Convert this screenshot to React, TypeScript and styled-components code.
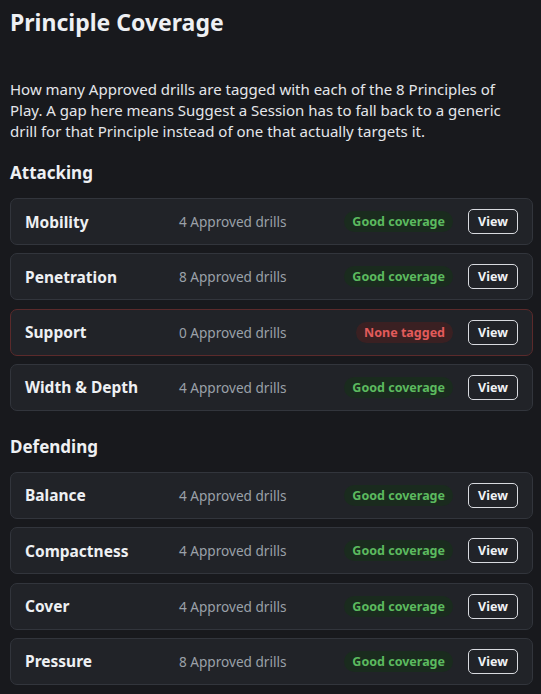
import React from "react";
import styled, { createGlobalStyle } from "styled-components";

const Global = createGlobalStyle`
  html, body { margin: 0; padding: 0; background: #18191d; }
  body { font-family: "Noto Sans", "Open Sans", sans-serif; color: #e6e8eb; }
`;

const Page = styled.div`
  padding: 0 8px 8px 10px;
  width: 541px;
  box-sizing: border-box;
`;

const Title = styled.h1`
  font-size: 23px;
  font-weight: 700;
  margin: 0;
  padding-top: 6px;
  line-height: 32px;
  color: #eef0f3;
`;

const Intro = styled.p`
  font-size: 15px;
  line-height: 21px;
  margin: 41px 0 0;
  max-width: 508px;
  color: #e4e6ea;
`;

const SectionTitle = styled.h2<{ $first?: boolean }>`
  font-size: 17px;
  font-weight: 700;
  line-height: 24px;
  margin: ${(p) => (p.$first ? "19px" : "24px")} 0 13px;
  color: #eef0f3;
`;

const List = styled.div`
  display: flex;
  flex-direction: column;
  gap: 8.33px;
  width: 523px;
`;

const Card = styled.div<{ $danger?: boolean }>`
  display: grid;
  grid-template-columns: 154px 1fr auto auto;
  align-items: center;
  height: 47px;
  box-sizing: border-box;
  padding: 0 14px;
  background: #212328;
  border: 1px solid ${(p) => (p.$danger ? "#5b2a2b" : "#32353c")};
  border-radius: 7px;
`;

const Name = styled.div`
  font-size: 15.5px;
  font-weight: 700;
  color: #eef0f3;
`;

const Count = styled.div`
  font-size: 13.6px;
  color: #9ba1a9;
`;

const Badge = styled.span<{ $danger?: boolean }>`
  display: inline-flex;
  align-items: center;
  height: 21px;
  padding: 0 8px;
  border-radius: 11px;
  font-size: 12.5px;
  font-weight: 700;
  margin-right: 15px;
  color: ${(p) => (p.$danger ? "#e25b5b" : "#5cba5f")};
  background: ${(p) => (p.$danger ? "#3a2022" : "#1a2b1e")};
`;

const ViewButton = styled.button`
  height: 25px;
  width: 50px;
  box-sizing: border-box;
  border: 1px solid #d8dadf;
  border-radius: 5px;
  background: transparent;
  color: #f0f2f5;
  font-family: inherit;
  font-size: 12.5px;
  font-weight: 700;
  padding: 0;
  cursor: pointer;
`;

type Row = { name: string; count: number };

const attacking: Row[] = [
  { name: "Mobility", count: 4 },
  { name: "Penetration", count: 8 },
  { name: "Support", count: 0 },
  { name: "Width & Depth", count: 4 },
];

const defending: Row[] = [
  { name: "Balance", count: 4 },
  { name: "Compactness", count: 4 },
  { name: "Cover", count: 4 },
  { name: "Pressure", count: 8 },
];

function PrincipleRow({ row }: { row: Row }) {
  const none = row.count === 0;
  return (
    <Card $danger={none}>
      <Name>{row.name}</Name>
      <Count>{row.count} Approved drills</Count>
      <Badge $danger={none}>{none ? "None tagged" : "Good coverage"}</Badge>
      <ViewButton>View</ViewButton>
    </Card>
  );
}

export default function App() {
  return (
    <Page>
      <Global />
      <Title>Principle Coverage</Title>
      <Intro>
        How many Approved drills are tagged with each of the 8 Principles of
        Play. A gap here means Suggest a Session has to fall back to a generic
        drill for that Principle instead of one that actually targets it.
      </Intro>
      <SectionTitle $first>Attacking</SectionTitle>
      <List>
        {attacking.map((r) => (
          <PrincipleRow key={r.name} row={r} />
        ))}
      </List>
      <SectionTitle>Defending</SectionTitle>
      <List>
        {defending.map((r) => (
          <PrincipleRow key={r.name} row={r} />
        ))}
      </List>
    </Page>
  );
}
